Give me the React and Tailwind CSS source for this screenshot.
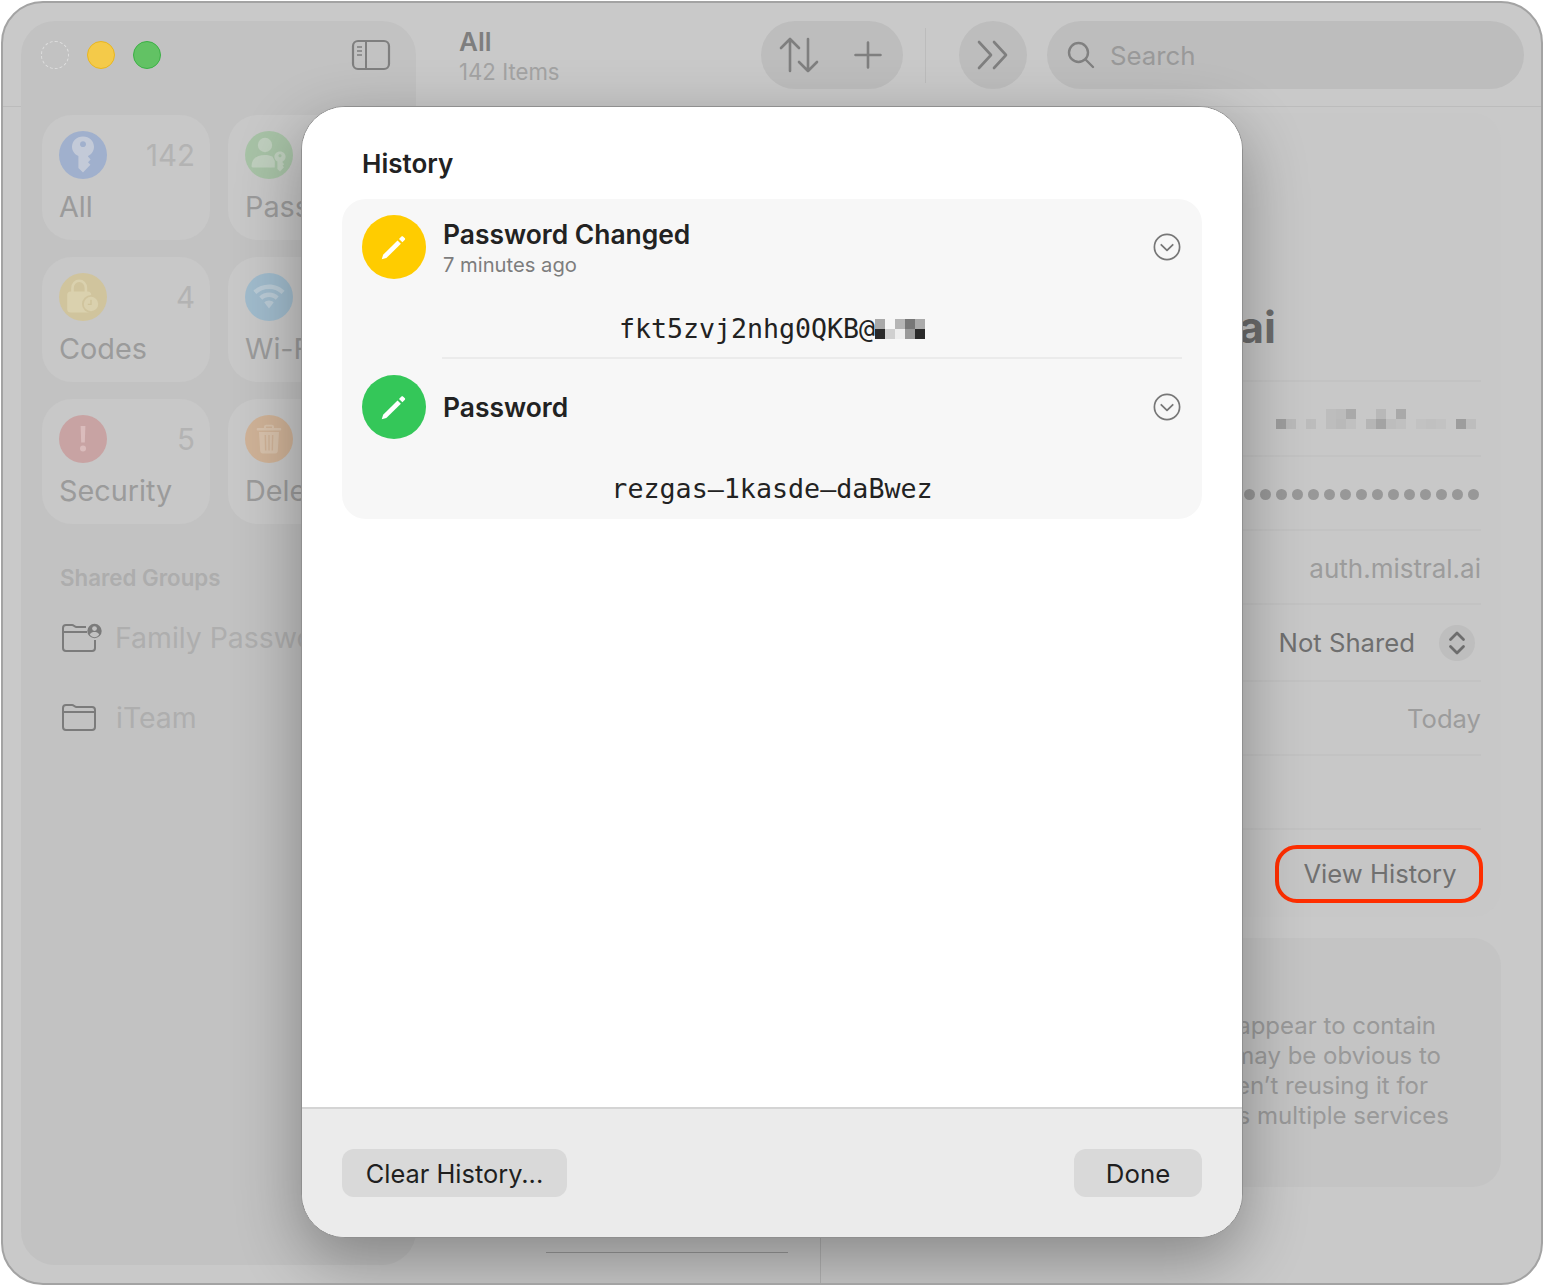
const Pencil = () => (
  <svg width="28" height="28" viewBox="0 0 26 26" fill="#fff">
    <path d="M1.6 24.4 L2.9 20.2 L16.3 6.9 L19.4 10 L5.9 23.3 Z" strokeLinejoin="round" />
    <path d="M17.6 5.5 L19.7 3.4 C20.3 2.8 21 2.8 21.6 3.4 L22.9 4.7 C23.5 5.3 23.5 6 22.9 6.6 L20.8 8.7 Z" />
  </svg>
);

const Chevron = () => (
  <svg width="28" height="28" viewBox="0 0 28 28" fill="none" stroke="#777" strokeLinecap="round" strokeLinejoin="round">
    <circle cx="14" cy="14" r="12.6" strokeWidth="1.7" />
    <path d="M8.3 11.8 L14 17.4 L19.7 11.8" strokeWidth="1.8" />
  </svg>
);

const KeyIcon = () => (
  <svg width="28" height="38" viewBox="0 0 28 38" fill="#c3cad8">
    <path fillRule="evenodd" d="M14 0.5 C20.4 0.5 25 5 25 10.8 C25 15 22.6 18.4 19 19.9 L19 20.6 L21.6 23.4 L19 26.2 L21.4 28.8 L14 36.6 L9.4 32 L9.4 20 C5.6 18.4 3 15 3 10.8 C3 5 7.6 0.5 14 0.5 Z M14 5.3 C12.3 5.3 11 6.6 11 8.2 C11 9.8 12.3 11.1 14 11.1 C15.7 11.1 17 9.8 17 8.2 C17 6.6 15.7 5.3 14 5.3 Z" />
  </svg>
);

const PersonKeyIcon = () => (
  <svg width="36" height="38" viewBox="0 0 36 38" fill="#bfcfbe">
    <circle cx="14" cy="9" r="7.2" />
    <path d="M0.5 30 C0.5 23 6 19 14 19 C17 19 19.4 19.6 21.4 20.6 L23.8 25 L23.8 31.5 L3 31.5 C1.4 31.5 0.5 31 0.5 30 Z" />
    <path fillRule="evenodd" d="M29 15.5 C32.3 15.5 34.6 18 34.6 20.8 C34.6 22.9 33.4 24.6 31.6 25.5 L31.6 26.6 L33.2 28.2 L31.6 29.8 L33 31.2 L29 35.6 L26.4 33 L26.4 25.5 C24.6 24.6 23.4 22.9 23.4 20.8 C23.4 18 25.7 15.5 29 15.5 Z M29 18.2 C28.1 18.2 27.4 18.9 27.4 19.7 C27.4 20.5 28.1 21.2 29 21.2 C29.9 21.2 30.6 20.5 30.6 19.7 C30.6 18.9 29.9 18.2 29 18.2 Z" />
  </svg>
);

const LockClockIcon = () => (
  <svg width="36" height="36" viewBox="0 0 36 36" fill="none">
    <path d="M7.5 13 L7.5 9 C7.5 4.8 10.4 1.8 14.2 1.8 C18 1.8 20.9 4.8 20.9 9 L20.9 13" stroke="#dad1ae" strokeWidth="2.6" />
    <rect x="2.2" y="12.6" width="24" height="21" rx="3.5" fill="#dad1ae" />
    <circle cx="26" cy="25" r="9" fill="#d0c49d" />
    <circle cx="26" cy="25" r="7.2" fill="#dad1ae" />
    <path d="M26 20.8 L26 25.4 L22.8 25.4" stroke="#cfc39a" strokeWidth="1.4" />
  </svg>
);

const WifiIcon = () => (
  <svg width="32" height="26" viewBox="0 0 32 26" fill="#bacbd6">
    <path d="M16 0.5 C22.2 0.5 27.6 2.9 31.6 6.8 L28.6 10 C25.4 6.9 21 5 16 5 C11 5 6.6 6.9 3.4 10 L0.4 6.8 C4.4 2.9 9.8 0.5 16 0.5 Z" />
    <path d="M16 8.6 C19.8 8.6 23.2 10.1 25.7 12.5 L22.7 15.7 C20.9 14 18.6 13 16 13 C13.4 13 11.1 14 9.3 15.7 L6.3 12.5 C8.8 10.1 12.2 8.6 16 8.6 Z" />
    <path d="M16 16.6 C17.8 16.6 19.5 17.3 20.7 18.4 L16 24.5 L11.3 18.4 C12.5 17.3 14.2 16.6 16 16.6 Z" />
  </svg>
);

const AlertIcon = () => (
  <svg width="10" height="28" viewBox="0 0 10 28" fill="#dabcbc">
    <path d="M2.6 1 L7.4 1 L6.8 17.5 L3.2 17.5 Z" />
    <circle cx="5" cy="23.5" r="3" />
  </svg>
);

const TrashIcon = () => (
  <svg width="26" height="30" viewBox="0 0 26 30" fill="#d8c2ac">
    <path fillRule="evenodd" d="M8 3 C8 1.6 9 0.8 10.2 0.8 L15.8 0.8 C17 0.8 18 1.6 18 3 L18 4 L24.6 4 C25.5 4 25.5 6.6 24.6 6.6 L1.4 6.6 C0.5 6.6 0.5 4 1.4 4 L8 4 Z M10 2.6 L10 4 L16 4 L16 2.6 Z" />
    <path fillRule="evenodd" d="M3 8 L23 8 L21.8 27 C21.7 28.5 20.8 29.4 19.3 29.4 L6.7 29.4 C5.2 29.4 4.3 28.5 4.2 27 Z M8.6 11 L9 26.6 L10.4 26.6 L10 11 Z M12.3 11 L12.3 26.6 L13.7 26.6 L13.7 11 Z M16 11 L15.6 26.6 L17 26.6 L17.4 11 Z" />
  </svg>
);

const tiles = [
  { label: "All", count: "142", bg: "bg-[#a0b0cd]", icon: <KeyIcon /> },
  { label: "Passwords", count: "", bg: "bg-[#a7c2a6]", icon: <PersonKeyIcon /> },
  { label: "Codes", count: "4", bg: "bg-[#d0c49d]", icon: <LockClockIcon /> },
  { label: "Wi-Fi", count: "", bg: "bg-[#a0bbcc]", icon: <WifiIcon /> },
  { label: "Security", count: "5", bg: "bg-[#c8a3a3]", icon: <AlertIcon /> },
  { label: "Deleted", count: "", bg: "bg-[#cfb297]", icon: <TrashIcon /> },
];

const Mosaic = ({ cells, width, height }) => (
  <svg width={width} height={height} viewBox={`0 0 ${width} ${height}`} shapeRendering="crispEdges">
    {cells.map(([x, y, c], i) => (
      <rect key={i} x={x} y={y} width="10" height="10" fill={c} />
    ))}
  </svg>
);

const emailMosaic = [
  [0, 0, "#a9a9a9"], [10, 0, "#f6f6f6"], [20, 0, "#b5b5b5"], [30, 0, "#777777"], [40, 0, "#aaaaaa"],
  [0, 10, "#2a2a2a"], [10, 10, "#d0d0d0"], [20, 10, "#eeeeee"], [30, 10, "#999999"], [40, 10, "#2a2a2a"],
];

const userMosaic = [
  [50, 0, "#bdbdbd"], [60, 0, "#bbbbbb"], [70, 0, "#a9a9a9"], [100, 0, "#b8b8b8"], [120, 0, "#a9a9a9"],
  [0, 10, "#9d9d9d"], [10, 10, "#b9b9b9"], [30, 10, "#bcbcbc"], [50, 10, "#bdbdbd"], [60, 10, "#b9b9b9"], [70, 10, "#c0c0c0"],
  [90, 10, "#b5b5b5"], [100, 10, "#a3a3a3"], [110, 10, "#bdbdbd"], [120, 10, "#c0c0c0"],
  [140, 10, "#c2c2c2"], [150, 10, "#c0c0c0"], [160, 10, "#c2c2c2"], [180, 10, "#9d9d9d"], [190, 10, "#bdbdbd"],
];

function Sidebar() {
  return (
    <aside className="my-[18px] ml-[18px] w-[395px] shrink-0 rounded-[34px] bg-[#c2c2c2] flex flex-col">
      <div className="h-[68px] flex items-center pl-[20px] pr-[25px]">
        <div className="w-[28px] h-[28px] rounded-full border border-dashed border-[#dedede]" />
        <div className="ml-[18px] w-[28px] h-[28px] rounded-full bg-[#f4ca49] border border-[#e8b620]" />
        <div className="ml-[18px] w-[28px] h-[28px] rounded-full bg-[#62c264] border border-[#3bb045]" />
        <svg className="ml-auto" width="40" height="32" viewBox="0 0 40 32" fill="none" stroke="#7f7f7f">
          <rect x="2" y="2" width="36" height="28" rx="5" strokeWidth="2.2" />
          <path d="M15 2 L15 30" strokeWidth="2" />
          <path d="M6 8 L11 8 M6 12 L11 12 M6 16 L11 16" strokeWidth="1.6" />
        </svg>
      </div>
      <div className="mt-[26px] px-[21px] grid grid-cols-[168px_168px] gap-x-[18px] gap-y-[17px]">
        {tiles.map((t) => (
          <div key={t.label} className="h-[125px] rounded-[30px] bg-[#c8c8c8] pl-[17px] pr-[15px] pt-[16px] flex flex-col">
            <div className="flex items-center justify-between h-[48px]">
              <div className={`w-[48px] h-[48px] rounded-full flex items-center justify-center ${t.bg}`}>{t.icon}</div>
              <span className="text-[29.5px] leading-[48px] text-[#b3b3b3]">{t.count}</span>
            </div>
            <div className="mt-[8px] text-[28.8px] leading-[40px] text-[#9b9b9b] whitespace-nowrap">{t.label}</div>
          </div>
        ))}
      </div>
      <div className="mt-[40px] ml-[39px] text-[22.3px] leading-[28px] font-semibold text-[#adadad]">Shared Groups</div>
      <div className="mt-[26px] ml-[41px] h-[40px] flex items-center whitespace-nowrap">
        <svg width="40" height="30" viewBox="0 0 40 30" fill="none" stroke="#7b7b7b" strokeWidth="2">
          <path d="M1 25 L1 5 C1 3 2 2 4 2 L10 2 C12 2 12.5 4 14.5 4 L24 4 M1 9 L25 9 M33 17 L33 25 C33 27 32 28 30 28 L4 28 C2 28 1 27 1 25" />
          <circle cx="32.5" cy="8" r="7.2" fill="#7b7b7b" stroke="none" />
          <circle cx="32.5" cy="5.6" r="2.4" fill="#c2c2c2" stroke="none" />
          <path d="M27.8 11.6 C28.8 9.6 30.6 9 32.5 9 C34.4 9 36.2 9.6 37.2 11.6 C36 13.4 34.4 14.2 32.5 14.2 C30.6 14.2 29 13.4 27.8 11.6 Z" fill="#c2c2c2" stroke="none" />
        </svg>
        <span className="ml-[13px] text-[28.4px] leading-[40px] text-[#aeaeae]">Family Passwords</span>
      </div>
      <div className="mt-[40px] ml-[41px] h-[40px] flex items-center">
        <svg width="34" height="28" viewBox="0 0 34 28" fill="none" stroke="#7b7b7b" strokeWidth="2">
          <path d="M1 23 L1 4 C1 2 2 1 4 1 L10 1 C12 1 12.5 3 14.5 3 L30 3 C32 3 33 4 33 6 L33 23 C33 25 32 26 30 26 L4 26 C2 26 1 25 1 23 Z" />
          <path d="M1 8 L33 8" />
        </svg>
        <span className="ml-[20px] text-[28.4px] leading-[40px] text-[#aeaeae]">iTeam</span>
      </div>
    </aside>
  );
}

function Toolbar() {
  return (
    <header className="h-[104px] shrink-0 border-b border-[#bcbcbc] flex items-start pt-[18px]">
      <div className="ml-[43px] w-[302px] pt-[4px]">
        <div className="text-[26px] leading-[34px] font-semibold text-[#7e7e7e]">All</div>
        <div className="text-[22.2px] leading-[26px] text-[#a3a3a3]">142 Items</div>
      </div>
      <div className="w-[142px] h-[68px] rounded-full bg-[#bdbdbd] flex items-center pl-[18px]">
        <svg width="40" height="36" viewBox="0 0 40 36" fill="none" stroke="#7f7f7f" strokeWidth="2.6" strokeLinecap="round" strokeLinejoin="round">
          <path d="M11 34 L11 2 M2 11 L11 2 L20 11" />
          <path d="M29 2 L29 34 M20 25 L29 34 L38 25" />
        </svg>
        <svg className="ml-[35px]" width="28" height="28" viewBox="0 0 28 28" fill="none" stroke="#7f7f7f" strokeWidth="2.6" strokeLinecap="round">
          <path d="M14 1.5 L14 26.5 M1.5 14 L26.5 14" />
        </svg>
      </div>
      <div className="ml-[22px] mt-[7px] w-px h-[55px] bg-[#bcbcbc]" />
      <div className="ml-[33px] w-[68px] h-[68px] rounded-full bg-[#bdbdbd] flex items-center justify-center">
        <svg width="34" height="30" viewBox="0 0 34 30" fill="none" stroke="#7f7f7f" strokeWidth="2.6" strokeLinecap="round" strokeLinejoin="round">
          <path d="M3 2 L15 15 L3 28" />
          <path d="M18 2 L30 15 L18 28" />
        </svg>
      </div>
      <div className="ml-[20px] w-[477px] h-[68px] rounded-[34px] bg-[#bdbdbd] flex items-center pl-[20px]">
        <svg width="28" height="28" viewBox="0 0 28 28" fill="none" stroke="#808080" strokeWidth="2.4" strokeLinecap="round">
          <circle cx="11.5" cy="11.5" r="9.5" />
          <path d="M18.5 18.5 L26 26" />
        </svg>
        <span className="ml-[15px] pt-[1px] text-[25.8px] leading-[34px] text-[#999999]">Search</span>
      </div>
    </header>
  );
}

function DetailRow({ h, children, last }) {
  return (
    <div className={`${h} flex items-center justify-end ${last ? "" : "border-b-2 border-[#c3c3c3]"}`}>{children}</div>
  );
}

function Detail() {
  return (
    <div className="flex-1 border-l border-[#b3b3b3] pt-[6px] pl-[20px] pr-[40px] flex flex-col">
      <div className="h-[804px] rounded-[28px] bg-[#c8c8c8] pr-[20px] flex flex-col">
        <div className="h-[269px] flex items-end justify-end border-b-2 border-[#c3c3c3] pb-[26px] pr-[205px]">
          <span className="text-[44px] leading-[54px] font-bold text-[#6c6c6c] whitespace-nowrap">mistral.ai</span>
        </div>
        <DetailRow h="h-[75px]">
          <div className="mr-[5px]">
            <Mosaic cells={userMosaic} width={200} height={20} />
          </div>
        </DetailRow>
        <DetailRow h="h-[74px]">
          <div className="flex gap-[5px] pr-[2px] pt-[2px]">
            {Array.from({ length: 16 }).map((_, i) => (
              <div key={i} className="w-[11px] h-[11px] rounded-full bg-[#989898]" />
            ))}
          </div>
        </DetailRow>
        <DetailRow h="h-[74px]">
          <span className="pt-[3px] text-[26px] leading-[34px] text-[#9c9c9c]">auth.mistral.ai</span>
        </DetailRow>
        <DetailRow h="h-[77px]">
          <span className="text-[25.7px] leading-[34px] text-[#6f6f6f]">Not Shared</span>
          <div className="ml-[24px] mr-[6px] w-[36px] h-[36px] rounded-full bg-[#bebebe] flex items-center justify-center">
            <svg width="18" height="26" viewBox="0 0 18 26" fill="none" stroke="#6d6d6d" strokeWidth="2.8" strokeLinecap="round" strokeLinejoin="round">
              <path d="M2.5 9.5 L9 3 L15.5 9.5" />
              <path d="M2.5 16.5 L9 23 L15.5 16.5" />
            </svg>
          </div>
        </DetailRow>
        <DetailRow h="h-[74px]">
          <span className="pt-[2px] text-[25.6px] leading-[34px] text-[#9c9c9c]">Today</span>
        </DetailRow>
        <DetailRow h="h-[74px]">
          <span />
        </DetailRow>
        <div className="pt-[15px] flex justify-end mr-[-2px]">
          <div className="w-[208px] h-[58px] pl-[2px] rounded-[22px] border-[4px] border-[#ff2e00] bg-[#c6c6c6] flex items-center justify-center text-[25.6px] leading-[34px] text-[#707070]">
            View History
          </div>
        </div>
      </div>
      <div className="mt-[21px] h-[249px] rounded-[28px] bg-[#c4c4c4] pt-[73px] flex flex-col items-end text-[24px] leading-[30px] text-[#999999] whitespace-nowrap">
        <div className="mr-[65px]">These characters appear to contain</div>
        <div className="mr-[60px]">a pattern that may be obvious to</div>
        <div className="mr-[73px]">others. Make sure you aren’t reusing it for</div>
        <div className="mr-[52px]">this password across multiple services</div>
      </div>
    </div>
  );
}

function HistoryModal() {
  return (
    <div className="absolute left-[298px] top-[103px] w-[942px] h-[1132px] rounded-[44px] border border-[#8f8f8f] bg-white shadow-[0_22px_65px_rgba(0,0,0,0.33)] overflow-hidden flex flex-col">
      <div className="flex-1 bg-white">
        <div className="pt-[39px] pl-[60px] text-[26px] leading-[36px] font-semibold text-[#222222]">History</div>
        <div className="mt-[17px] mx-[40px] h-[320px] rounded-[24px] bg-[#f7f7f7] flex flex-col">
          <div className="flex pt-[16px] pl-[20px] pr-[21px]">
            <div className="w-[64px] h-[64px] rounded-full bg-[#ffcc00] flex items-center justify-center">
              <Pencil />
            </div>
            <div className="ml-[17px] pt-[1px]">
              <div className="text-[26.4px] leading-[36px] font-semibold text-[#222222] whitespace-nowrap">Password Changed</div>
              <div className="text-[20.2px] leading-[25px] text-[#7d7d7d]">7 minutes ago</div>
            </div>
            <div className="ml-auto pt-[18px]">
              <Chevron />
            </div>
          </div>
          <div className="mt-[33px] h-[34px] flex items-center justify-center font-['DejaVu_Sans_Mono',monospace] text-[26.6px] leading-[34px] text-[#222222]">
            <span>fkt5zvj2nhg0QKB@</span>
            <Mosaic cells={emailMosaic} width={50} height={20} />
          </div>
          <div className="mt-[11px] ml-[100px] mr-[20px] h-[2px] bg-[#ebebeb]" />
          <div className="flex pt-[16px] pl-[20px] pr-[21px]">
            <div className="w-[64px] h-[64px] rounded-full bg-[#34c759] flex items-center justify-center">
              <Pencil />
            </div>
            <div className="ml-[17px] h-[64px] pt-[2px] flex items-center text-[26.4px] font-semibold text-[#222222]">Password</div>
            <div className="ml-auto pt-[18px]">
              <Chevron />
            </div>
          </div>
          <div className="mt-[33px] h-[34px] text-center font-['DejaVu_Sans_Mono',monospace] text-[26.7px] leading-[34px] text-[#222222]">
            rezgas–1kasde–daBwez
          </div>
        </div>
      </div>
      <div className="h-[130px] shrink-0 border-t-2 border-[#d4d4d4] bg-[#ebebeb] pt-[40px] px-[40px] flex justify-between items-start">
        <div className="w-[225px] h-[48px] pt-[2px] rounded-[12px] bg-[#d9d9d9] flex items-center justify-center text-[25.4px] text-[#1f1f1f]">Clear History...</div>
        <div className="w-[128px] h-[48px] pt-[2px] rounded-[12px] bg-[#d9d9d9] flex items-center justify-center text-[25.8px] text-[#1f1f1f]">Done</div>
      </div>
    </div>
  );
}

export default function App() {
  return (
    <div className="w-[1544px] h-[1286px] bg-white p-[1px] font-['Inter',sans-serif]">
      <div className="relative w-[1542px] h-[1284px] rounded-[42px] border-2 border-[#a3a3a3] bg-[#c9c9c9] overflow-hidden flex">
        <div className="absolute left-0 top-[103px] w-[18px] h-px bg-[#bcbcbc]" />
        <Sidebar />
        <main className="flex-1 min-w-0 flex flex-col">
          <Toolbar />
          <div className="flex-1 flex min-h-0">
            <div className="w-[404px] shrink-0 flex flex-col justify-end pb-[30px]">
              <div className="ml-[130px] w-[242px] h-px bg-[#9a9a9a]" />
            </div>
            <Detail />
          </div>
        </main>
        <HistoryModal />
      </div>
    </div>
  );
}
